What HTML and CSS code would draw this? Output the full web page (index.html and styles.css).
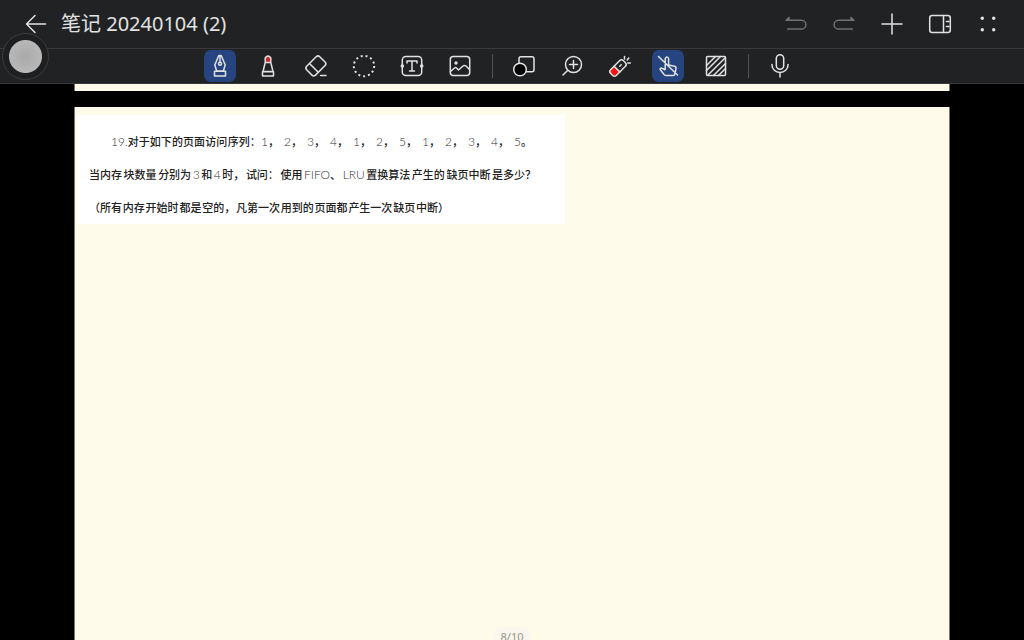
FILE: index.html
```html
<!DOCTYPE html>
<html lang="zh-CN">
<head>
<meta charset="utf-8">
<meta name="viewport" content="width=device-width, initial-scale=1">
<title>笔记 20240104 (2)</title>
<link rel="stylesheet" href="styles.css">
</head>
<body>
<div class="app">
  <header class="titlebar">
    <button class="tool" aria-label="返回"><svg class="icon" viewBox="0 0 32 32"><path d="M25.500 16H6.500M15 7.500L6.500 16l8.500 8.500"/></svg></button>
    <h1 class="title">笔记 20240104 (2)</h1>
    <div class="actions">
      <button class="tool" aria-label="撤销" disabled><svg class="icon" viewBox="0 0 32 32"><path d="M6 12.300h15.500a4.300 4.300 0 0 1 0 8.800H7.500M6 12.300l3-2.800v2.800"/></svg></button>
      <button class="tool" aria-label="重做" disabled><svg class="icon" viewBox="0 0 32 32"><path d="M26 12.300H10.500a4.300 4.300 0 0 0 0 8.800h14M26 12.300l-3-2.800v2.800"/></svg></button>
      <button class="tool" aria-label="添加"><svg class="icon" viewBox="0 0 32 32"><path d="M16 6v20M6 16h20"/></svg></button>
      <button class="tool" aria-label="侧栏"><svg class="icon" viewBox="0 0 32 32"><rect x="5.700" y="7.500" width="20.600" height="17" rx="2.500"/><path d="M19.500 7.500v17M22.500 13.500h2.500M22.500 18.500h2.500"/></svg></button>
      <button class="tool" aria-label="更多"><svg class="icon" viewBox="0 0 32 32"><g class="solid"><circle cx="10.300" cy="10.300" r="1.700"/><circle cx="21.700" cy="10.300" r="1.700"/><circle cx="10.300" cy="21.700" r="1.700"/><circle cx="21.700" cy="21.700" r="1.700"/></g></svg></button>
    </div>
  </header>

  <nav class="toolbar" aria-label="工具栏">
    <button class="tool selected" aria-label="钢笔" aria-pressed="true"><svg class="icon" viewBox="0 0 32 32"><path d="M14.800 5.500L10.800 15l1.900 6h6.600l1.900-6-4-9.500zM16 5.500V12M10.500 21.300h11v4.700h-11z"/><circle cx="16" cy="13.800" r="1.500"/></svg></button>
    <button class="tool" aria-label="马克笔"><svg class="icon" viewBox="0 0 32 32"><path class="marker" d="M13.300 12V7.500q2.700-3 5.400 0V12z"/><path d="M13.200 11.500V8q2.800-4 5.600 0v3.500M13.200 12.500h5.600l2.200 9H11zM10.500 21.700h11v4.300h-11z"/></svg></button>
    <button class="tool" aria-label="橡皮"><svg class="icon" viewBox="0 0 32 32"><rect x="6.500" y="9.500" width="18.500" height="12.500" rx="2.500" transform="rotate(-45 16 15.700)"/><path d="M9.500 13.500l8.500 8.500M20.500 25.500h5.500"/></svg></button>
    <button class="tool" aria-label="套索"><svg class="icon" viewBox="0 0 32 32"><circle class="lasso" cx="16" cy="16" r="10.200"/></svg></button>
    <button class="tool" aria-label="文本"><svg class="icon" viewBox="0 0 32 32"><rect x="6.300" y="6.500" width="19.400" height="19" rx="3.500"/><path d="M11 13v-2h10v2M16 11v10M13.500 21h5"/><g class="solid"><circle cx="6.300" cy="16" r="1.800"/><circle cx="25.700" cy="16" r="1.800"/></g></svg></button>
    <button class="tool" aria-label="图片"><svg class="icon" viewBox="0 0 32 32"><rect x="6.300" y="6.500" width="19.400" height="19" rx="3"/><path d="M6.500 21.500l4-3.500q1-.800 2 0l2 2 4.500-4q1.500-1.200 3 0l3.500 3.500"/><circle class="solid" cx="12" cy="13" r="1.700"/></svg></button>
    <span class="divider"></span>
    <button class="tool" aria-label="形状"><svg class="icon" viewBox="0 0 32 32"><rect x="11" y="6.700" width="15" height="15" rx="2"/><circle class="ink" cx="12" cy="19.500" r="6.300"/></svg></button>
    <button class="tool" aria-label="放大"><svg class="icon" viewBox="0 0 32 32"><circle cx="17.500" cy="14.500" r="8"/><path d="M11.800 20.200L7 25M17.500 10.500v8M13.500 14.500h8"/></svg></button>
    <button class="tool" aria-label="激光笔"><svg class="icon" viewBox="0 0 32 32"><g transform="rotate(45 14 18)"><path class="laser" d="M10.200 19.500h7.600v7h-7.600z"/><rect x="10" y="9" width="8" height="18" rx="2.500"/><path d="M10 19.500h8M14 13.500v2"/></g><path d="M20.500 6.500V9M24.800 8l-1.600 2M23.800 13h2.500"/></svg></button>
    <button class="tool selected" aria-label="禁用手指书写" aria-pressed="true"><svg class="icon" viewBox="0 0 32 32"><path d="M13.200 15V8.500q1.700-3 3.400 0V15l6 1.200q1.800.500 1.400 2.500l-1.200 5.500q-.300 1.300-1.600 1.300H14q-1 0-1.700-.800L8.500 20q-1-1.700.800-2l3.900 1.800V15M6.500 6.500l19 18.500"/></svg></button>
    <button class="tool" aria-label="背景"><svg class="icon" viewBox="0 0 32 32"><rect x="6.500" y="6.500" width="19" height="19" rx="1"/><path d="M6.500 15.500l9-9M6.500 20.500l14-14M8 25l17-17M13.500 25.500l12-12M18.500 25.500l7-7"/></svg></button>
    <span class="divider"></span>
    <button class="tool" aria-label="录音"><svg class="icon" viewBox="0 0 32 32"><rect x="12.300" y="4.700" width="7.400" height="14.500" rx="3.700"/><path d="M8 14.500v.500a8 7.500 0 0 0 16 0v-.500M16 22.500V27"/></svg></button>
  </nav>

  <main class="canvas">
    <section class="sheet sheet-previous" aria-label="第 7 页"></section>
    <section class="sheet sheet-current" aria-label="第 8 页">
      <article class="clip">
        <p class="line line-first">
          <span><span class="latin">19.</span>对于如下</span><span>的页面</span><span>访问</span><span>序列：</span>
          <span class="sequence"><span><b>1</b>，</span><span><b>2</b>，</span><span><b>3</b>，</span><span><b>4</b>，</span><span><b>1</b>，</span><span><b>2</b>，</span><span><b>5</b>，</span><span><b>1</b>，</span><span><b>2</b>，</span><span><b>3</b>，</span><span><b>4</b>，</span><span><b>5</b>。</span></span>
        </p>
        <p class="line line-second"><span>当内存</span><span>块数量</span><span>分别为</span> <span class="latin">3</span> <span>和</span> <span class="latin">4</span> <span>时，</span><span>试问：</span><span>使用</span> <span><span class="latin">FIFO</span>、</span><span class="latin">LRU</span> <span>置换算法</span><span>产生的</span><span>缺页中断</span><span>是多少？</span></p>
        <p class="line line-third"><span>（所有</span><span>内存</span><span>开始时</span><span>都是</span><span>空的，</span><span>凡第一次</span><span>用到的</span><span>页面都</span><span>产生一次</span><span>缺页</span><span>中断）</span></p>
      </article>
    </section>
    <div class="counter">8/10</div>
  </main>
  <button class="floating" aria-label="悬浮按钮"></button>
</div>
</body>
</html>
```
FILE: styles.css
```css
* {
  box-sizing: border-box;
}

body {
  margin: 0;
  background: #000;
  font-family: "Noto Sans", "Noto Sans CJK SC", sans-serif;
}

.app {
  position: relative;
  display: flex;
  flex-direction: column;
  height: 100vh;
  overflow: hidden;
}

.titlebar,
.toolbar {
  display: flex;
  flex: none;
  align-items: center;
  background: #212224;
  color: #e2e2e2;
}

.titlebar {
  gap: 9px;
  height: 49px;
  padding: 0 20px;
  border-bottom: 1px solid #39393b;
}

.title {
  margin: 0;
  font-size: 20px;
  font-weight: 400;
  line-height: 28px;
}

.actions {
  display: flex;
  gap: 16px;
  margin-left: auto;
}

.toolbar {
  justify-content: center;
  gap: 16px;
  height: 35px;
  padding-right: 24px;
  border-bottom: 1px solid #39393b;
}

.tool {
  width: 32px;
  height: 32px;
  padding: 0;
  border: 0;
  border-radius: 7px;
  background: transparent;
  color: inherit;
}

.tool:disabled {
  color: #707173;
}

.selected {
  background: #264580;
}

.icon {
  display: block;
  width: 32px;
  height: 32px;
  fill: none;
  stroke: currentColor;
  stroke-width: 1.5;
  stroke-linecap: round;
  stroke-linejoin: round;
}

.solid {
  fill: currentColor;
  stroke: none;
}

.marker {
  fill: #c52630;
  stroke: none;
}

.laser {
  fill: #f81414;
  stroke: none;
}

.ink {
  fill: #000;
}

.lasso {
  stroke-width: 2;
  stroke-dasharray: 2 2.930;
  stroke-linecap: butt;
}

.divider {
  width: 1px;
  height: 24px;
  margin-right: -1px;
  background: #505153;
}

.canvas {
  position: relative;
  display: flex;
  flex: 1;
  flex-direction: column;
  gap: 16px;
  min-height: 0;
  padding: 0 74px;
}

.sheet {
  border: solid #77756c;
  border-width: 0 1px;
  background: #fffbea;
}

.sheet-previous {
  height: 7px;
}

.sheet-current {
  flex: 1;
  padding: 8px 2px;
}

.clip {
  width: 488px;
  max-width: 100%;
  padding: 10px 12px 0;
  background: #fff;
  color: #222;
  font-family: "Noto Sans CJK SC", sans-serif;
  font-size: 11px;
  font-weight: 500;
  line-height: 33px;
  white-space: nowrap;
}

.line {
  display: flex;
  justify-content: space-between;
  margin: 0;
}

.line-first {
  width: 448px;
  padding-left: 22px;
}

.line-second {
  width: 447px;
}

.line-third {
  width: 360px;
}

.latin,
.sequence b {
  color: #333;
  font-family: Lato, "Noto Sans", sans-serif;
  font-size: 12px;
  font-weight: 300;
}

.sequence {
  display: grid;
  grid-template-columns: repeat(12, 23px);
}

.counter {
  position: absolute;
  bottom: -7px;
  left: 50%;
  width: 36px;
  border-radius: 6px;
  background: #faf8ee;
  color: #96948c;
  font-size: 11px;
  line-height: 20px;
  text-align: center;
  transform: translateX(-50%);
}

.floating {
  position: absolute;
  top: 33px;
  left: 2px;
  width: 47px;
  height: 47px;
  padding: 0;
  border: 1px solid #3c3c3e;
  border-radius: 50%;
  background: radial-gradient(circle, #aaa9aa 0, #b8b7b8 15px, #b8b7b8 16px, #1e1f21 17px);
}
```
